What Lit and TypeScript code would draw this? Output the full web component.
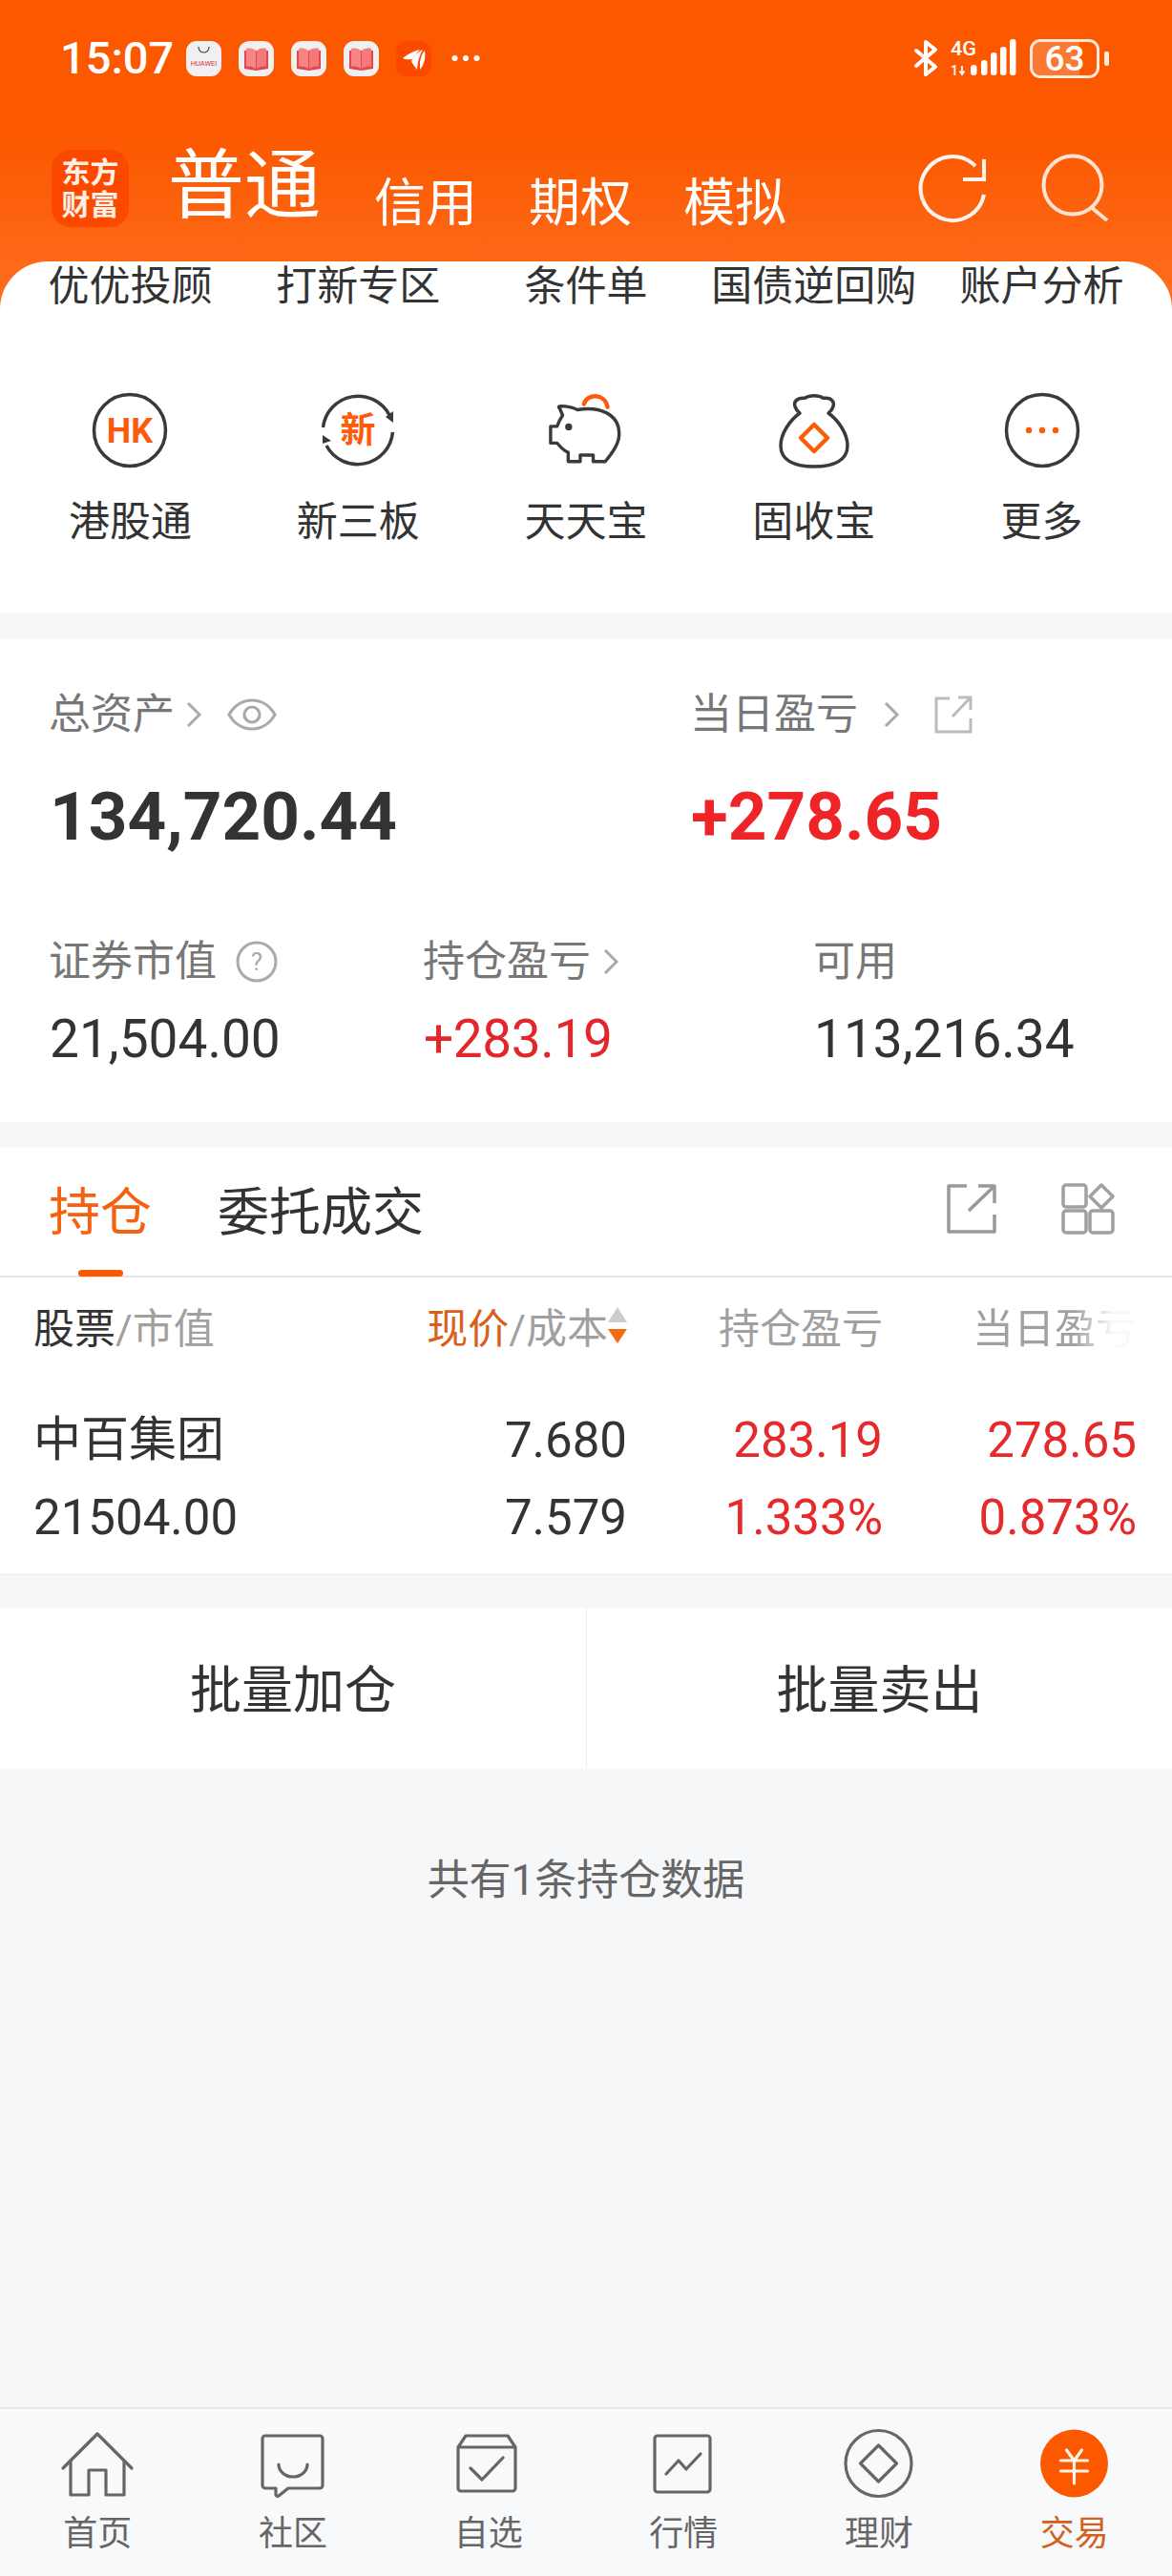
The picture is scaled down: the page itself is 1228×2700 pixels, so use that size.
import { LitElement, html, css } from "lit";
import { customElement } from "lit/decorators.js";

const book = html`<svg class="tile" viewBox="0 0 37 37">
  <rect width="37" height="37" rx="11" fill="#f1efef"/>
  <path d="M6 10 V29 L18.5 31 L31 29 V10 Z" fill="#e2474f"/>
  <path d="M8 8 C12 7 16 8 18 10 V29 C15 27 11 26 8 27 Z" fill="#f68584"/>
  <path d="M29 8 C25 7 21 8 19 10 V29 C22 27 26 26 29 27 Z" fill="#f47a7a"/>
</svg>`;

const quick1 = ["优优投顾", "打新专区", "条件单", "国债逆回购", "账户分析"];

const quick2 = [
  {
    label: "港股通",
    icon: html`<svg class="q" viewBox="0 0 80 80" fill="none">
      <circle cx="40" cy="40" r="37.5" stroke="#3a3a3a" stroke-width="3.5"/>
      <text x="40" y="53" class="qtext" text-anchor="middle" font-size="36">HK</text></svg>`,
  },
  {
    label: "新三板",
    icon: html`<svg class="q" viewBox="0 0 80 80" fill="none">
      <path d="M3.5 37 A37 37 0 0 1 73 24" stroke="#3a3a3a" stroke-width="3.5"/>
      <path d="M76.5 42 A37 37 0 0 1 7 56" stroke="#3a3a3a" stroke-width="3.5"/>
      <path d="M69 26 L77 20 V32 Z M3 54 V45 L12 51 Z" fill="#3a3a3a"/>
      <text x="40" y="53" class="qtext" text-anchor="middle" font-size="37">新</text></svg>`,
  },
  {
    label: "天天宝",
    icon: html`<svg class="q" viewBox="0 0 80 80" fill="none">
      <g transform="translate(0 1) scale(.97)">
      <path d="M39 12 C42 0 62 0 64.500 15" stroke="#fb5b0a" stroke-width="4.500" stroke-linecap="round"/>
      <path d="M13 17 Q10 14 14 14 Q24 14 32 18 C55 14 77 22 77 44 C77 55 70 64 62 74 H49 V67 H35 V74 H22 V64 C16 62 12 56 10 54 H3 V36 H10 C12 30 14 27 16 24 Z" stroke="#3a3a3a" stroke-width="3.500" stroke-linejoin="round"/>
      <circle cx="22.500" cy="36.500" r="3.800" fill="#3a3a3a"/></g></svg>`,
  },
  {
    label: "固收宝",
    icon: html`<svg class="q" viewBox="0 0 80 80" fill="none">
      <path d="M25 22 C20 18 18 12 21 9 C25 5 29 7 31 6 C35 3 45 3 49 6 C52 7 56 5 59 9 C62 12 60 18 55 22 C66 30 75 44 75 56 C75 72 60 78 40 78 C20 78 5 72 5 56 C5 44 14 30 25 22 Z" stroke="#3a3a3a" stroke-width="3.500" stroke-linejoin="round"/>
      <path d="M40 34 L54 48 L40 62 L26 48 Z" stroke="#fb5b0a" stroke-width="4.500" stroke-linejoin="round"/></svg>`,
  },
  {
    label: "更多",
    icon: html`<svg class="q" viewBox="0 0 80 80" fill="none">
      <circle cx="40" cy="40" r="37.500" stroke="#3a3a3a" stroke-width="3.500"/>
      <circle cx="26" cy="40" r="3.200" fill="#fb5b0a"/><circle cx="40" cy="40" r="3.200" fill="#fb5b0a"/><circle cx="54" cy="40" r="3.200" fill="#fb5b0a"/></svg>`,
  },
];

const navs = [
  {
    label: "首页",
    icon: html`<svg class="n" viewBox="0 0 80 80" fill="none" stroke="#666" stroke-width="3.200" stroke-linejoin="round" stroke-linecap="round">
      <path d="M4 42 L40 6 L76 42"/><path d="M12 34 V70 H31 V44 H49 V70 H68 V34"/></svg>`,
  },
  {
    label: "社区",
    icon: html`<svg class="n" viewBox="0 0 80 80" fill="none" stroke="#666" stroke-width="3.200" stroke-linejoin="round" stroke-linecap="round">
      <path d="M11 8 H68 a3 3 0 0 1 3 3 V60 a3 3 0 0 1 -3 3 H35 L25 71 q-2 1 -3 -1 V63 H11 a3 3 0 0 1 -3 -3 V11 a3 3 0 0 1 3 -3 z"/>
      <path d="M25 38 a15 13 0 0 0 30 0"/></svg>`,
  },
  {
    label: "自选",
    icon: html`<svg class="n" viewBox="0 0 80 80" fill="none" stroke="#666" stroke-width="3.200" stroke-linejoin="round" stroke-linecap="round">
      <path d="M8 20 L16 8 H60 L68 20 V63 a3 3 0 0 1 -3 3 H11 a3 3 0 0 1 -3 -3 Z M8 20 H68"/>
      <path d="M21 42 L33 54 L55 31"/></svg>`,
  },
  {
    label: "行情",
    icon: html`<svg class="n" viewBox="0 0 80 80" fill="none" stroke="#666" stroke-width="3.200" stroke-linejoin="round" stroke-linecap="round">
      <rect x="10" y="8" width="58" height="59" rx="3"/>
      <path d="M22 48 L35 34 L43 43 L58 27"/></svg>`,
  },
  {
    label: "理财",
    icon: html`<svg class="n" viewBox="0 0 80 80" fill="none" stroke="#666" stroke-width="3.200" stroke-linejoin="round">
      <circle cx="39.500" cy="37" r="34.500"/><path d="M39.500 18 L58.500 37 L39.500 56 L20.500 37 Z"/></svg>`,
  },
  {
    label: "交易",
    active: true,
    icon: html`<svg class="n" viewBox="0 0 80 80" fill="none" stroke="#fff3ea" stroke-width="3.200" stroke-linecap="round">
      <circle cx="39.500" cy="37" r="35.500" fill="#fb5800" stroke="none"/>
      <path d="M31.500 23 L39.500 34 L47.500 23 M25.500 34 H53.500 M25.500 45 H53.500 M39.500 34 V58"/></svg>`,
  },
];

const chevron = html`<svg class="chev" viewBox="0 0 18 28" fill="none" stroke="#aaa" stroke-width="3"><path d="M3 2 L15 14 L3 26"/></svg>`;

@customElement("app-root")
export class AppRoot extends LitElement {
  static styles = css`
    :host {
      display: flex;
      flex-direction: column;
      width: 1228px;
      height: 2700px;
      overflow: hidden;
      background: #f6f7f9;
      font-family: Roboto, "Noto Sans CJK SC", sans-serif;
      color: #333;
    }
    .head {
      background: linear-gradient(#fb5800 0, #fb5800 140px, #ff6f20 330px);
      padding-top: 26px;
    }
    .status {
      display: flex;
      align-items: center;
      height: 70px;
      padding-left: 63px;
      color: #fff;
    }
    .time {
      font-size: 47px;
      font-weight: 500;
      line-height: 56px;
      width: 132px;
    }
    .tile { width: 37px; height: 37px; margin-right: 18px; flex: none; }
    .more { width: 30px; height: 8px; margin-left: 3px; flex: none; }
    .status-right { margin-left: auto; display: flex; align-items: center; padding-right: 66px; }
    .bt { width: 24px; height: 38px; margin-right: 13px; }
    .sig { width: 72px; height: 40px; margin-right: 12px; }
    .sig text { font-family: Roboto, sans-serif; font-weight: 500; fill: #fff; }
    .bat {
      position: relative;
      box-sizing: border-box;
      width: 73px;
      height: 41px;
      border: 3px solid #ffe9dc;
      border-radius: 11px;
      display: flex;
      align-items: center;
      justify-content: center;
      font-size: 37px;
      font-weight: 500;
    }
    .bat-fill { position: absolute; left: 0; top: 0; bottom: 0; width: 49px; border-radius: 8px 0 0 8px; background: rgba(255, 255, 255, 0.2); }
    .bat-num { position: relative; line-height: 35px; }
    .tip { width: 5px; height: 15px; background: #ffe9dc; border-radius: 2px; margin-left: 5px; }
    .brand {
      display: flex;
      align-items: flex-end;
      height: 81px;
      margin-top: 61px;
      padding: 0 60px 0 54px;
      color: #fff;
    }
    .logo {
      width: 81px;
      height: 81px;
      border-radius: 20px;
      background: #fb4a00;
      color: #fff0e6;
      display: flex;
      flex-direction: column;
      align-items: center;
      justify-content: center;
      font-size: 30px;
      line-height: 34px;
      font-weight: 700;
      margin-right: 41px;
      flex: none;
    }
    .main-tab { font-size: 80px; line-height: 81px; margin-right: 56px; position: relative; top: -2px; }
    .sub-tab { font-size: 54px; line-height: 56px; margin-right: 54px; position: relative; top: 4px; }
    .ico-r { width: 80px; height: 80px; flex: none; }
    .refresh { margin-left: auto; margin-right: 50px; }
    .card {
      background: #fff;
      border-radius: 50px 50px 0 0;
      margin-top: 36px;
      height: 368px;
      padding: 0 17px;
      box-sizing: border-box;
      position: relative;
    }
    .q1 { display: grid; grid-template-columns: repeat(5, 1fr); height: 52px; }
    .q1 div { text-align: center; font-size: 43px; line-height: 52px; white-space: nowrap; }
    .q2 { display: grid; grid-template-columns: repeat(5, 1fr); margin-top: 85px; }
    .q2 .it { display: flex; flex-direction: column; align-items: center; }
    .q { width: 80px; height: 80px; display: block; }
    .qtext { fill: #fb5b0a; font-weight: 700; font-family: Roboto, "Noto Sans CJK SC", sans-serif; }
    .q2 .lb { font-size: 43px; line-height: 52px; margin-top: 30px; }
    .stats {
      background: #fff;
      margin-top: 28px;
      height: 506px;
      padding: 0 0 0 51px;
      box-sizing: border-box;
    }
    .lab {
      display: flex;
      align-items: center;
      font-size: 44px;
      line-height: 52px;
      color: #777;
      height: 52px;
    }
    .chev { width: 18px; height: 28px; flex: none; }
    .r1 { display: grid; grid-template-columns: 672px 1fr; padding-top: 53px; }
    .bigv { font-size: 71px; font-weight: 700; line-height: 84px; margin-top: 39px; margin-left: 1px; }
    .red1 { color: #ee2427; }
    .r2 { display: grid; grid-template-columns: 392px 409px 1fr; margin-top: 84px; }
    .midv { font-size: 55px; line-height: 64px; margin-top: 23px; margin-left: 1px; }
    .red2 { color: #e3262b; letter-spacing: -0.4px; }
    .table {
      background: #fff;
      margin-top: 27px;
      height: 447px;
      border-bottom: 1px solid #ececec;
    }
    .tabs {
      position: relative;
      display: flex;
      align-items: center;
      height: 136px;
      padding: 4px 60px 0 51px;
      border-bottom: 2px solid #e6e6e6;
      box-sizing: border-box;
    }
    .tab { font-size: 54px; line-height: 64px; margin-right: 69px; }
    .tab.on { color: #f4620f; }
    .bar { position: absolute; left: 82px; bottom: -1px; width: 47px; height: 7px; border-radius: 4px; background: #fb5800; }
    .ext { width: 52px; height: 52px; margin-left: auto; margin-right: 68px; position: relative; top: -5px; }
    .grd { width: 56px; height: 54px; position: relative; top: -5px; }
    .cols {
      display: grid;
      grid-template-columns: 1fr 280px 268px 266px;
      padding: 0 37px 0 35px;
    }
    .th { height: 100px; align-items: center; font-size: 43px; color: #a0a0a0; }
    .num { text-align: right; white-space: nowrap; }
    .dk { color: #333; }
    .or { color: #d9601a; }
    .sort { display: flex; justify-content: flex-end; align-items: center; }
    .sort svg { width: 20px; height: 38px; margin-left: 0; flex: none; }
    .fade {
      display: inline-block;
      -webkit-mask-image: linear-gradient(to right, #000 62%, rgba(0, 0, 0, 0.08) 85%);
      mask-image: linear-gradient(to right, #000 62%, rgba(0, 0, 0, 0.08) 85%);
    }
    .tr { font-size: 51px; line-height: 81px; padding-top: 30px; }
    .tr .name { font-size: 50px; }
    .trd { color: #e52a2c; }
    .btns { display: grid; grid-template-columns: 1fr 1fr; height: 169px; background: #fff; margin-top: 34px; }
    .btn { display: flex; align-items: center; justify-content: center; font-size: 54px; padding-bottom: 4px; }
    .btn + .btn { border-left: 1px solid #eee; }
    .empty { flex: 1; text-align: center; font-size: 44px; line-height: 54px; color: #666; padding-top: 90px; }
    .nav {
      display: grid;
      grid-template-columns: repeat(6, 1fr);
      height: 177px;
      background: #f8f9fb;
      border-top: 2px solid #e6e8ea;
      box-sizing: border-box;
    }
    .nav .it { display: flex; flex-direction: column; align-items: center; padding-top: 20px; }
    .n { width: 80px; height: 80px; display: block; }
    .nav .lb { font-size: 36px; line-height: 40px; color: #666; margin-top: 11px; }
    .nav .lb.on { color: #d2601f; }
    .mr { margin-left: 11px; }
    .eye { width: 52px; height: 36px; margin-left: 26px; }
    .share { width: 40px; height: 40px; margin-left: 36px; }
    .help { width: 44px; height: 44px; margin-left: 20px; }
    .sp27 { width: 26px; }
    .sp13 { width: 12px; }
  `;

  render() {
    return html`
      <section class="head">
        <div class="status">
          <div class="time">15:07</div>
          <svg class="tile" viewBox="0 0 37 37">
            <rect width="37" height="37" rx="11" fill="#f1efef"/>
            <path d="M13 6 C13 14 24 14 24 6" fill="none" stroke="#444" stroke-width="1.200"/>
            <text x="18.500" y="26" font-size="7.500" fill="#d4343f" text-anchor="middle" font-family="Roboto, sans-serif">HUAWEI</text>
          </svg>
          ${book}${book}${book}
          <svg class="tile" viewBox="0 0 37 37">
            <rect width="37" height="37" rx="11" fill="#fb4a00"/>
            <path d="M7 18 C13 13 20 10 25 9 C21 13 19 16 17 19 C14 19 10 20 7 18 Z M16 21 C19 15 23 11 28 9 C25 14 24 18 23 22 L22 30 C20 27 17 24 16 21 Z M25 22 C26 17 27 13 30 10 C31 17 30 24 25 30 Z" fill="#fff"/>
          </svg>
          <svg class="more" viewBox="0 0 30 8" fill="#fff"><circle cx="3.500" cy="4" r="3"/><circle cx="15" cy="4" r="3"/><circle cx="26.500" cy="4" r="3"/></svg>
          <div class="status-right">
            <svg class="bt" viewBox="0 0 24 38" fill="none" stroke="#fff" stroke-width="4" stroke-linejoin="round" stroke-linecap="round">
              <path d="M2 11 L22 28 L12 36 V2 L22 10 L2 27"/>
            </svg>
            <svg class="sig" viewBox="0 0 72 40" fill="#fff">
              <text x="1" y="17" font-size="21" textLength="27" lengthAdjust="spacingAndGlyphs">4G</text>
              <text x="1" y="38" font-size="14">1</text>
              <path d="M13 28 V36 M10.500 33.500 L13 37 L15.500 33.500" stroke="#fff" stroke-width="1.800" fill="none"/>
              <rect x="22" y="27" width="6.500" height="11" rx="3"/>
              <rect x="33" y="22" width="6.500" height="16" rx="3"/>
              <rect x="43" y="14" width="6.500" height="24" rx="3"/>
              <rect x="53" y="8" width="6.500" height="30" rx="3"/>
              <rect x="63" y="0" width="6.500" height="38" rx="3"/>
            </svg>
            <div class="bat"><div class="bat-fill"></div><span class="bat-num">63</span></div>
            <div class="tip"></div>
          </div>
        </div>
        <div class="brand">
          <div class="logo"><div>东方</div><div>财富</div></div>
          <div class="main-tab">普通</div>
          <div class="sub-tab">信用</div>
          <div class="sub-tab">期权</div>
          <div class="sub-tab">模拟</div>
          <svg class="ico-r refresh" viewBox="0 0 80 80" fill="none" stroke="#fff5ee" stroke-width="4">
            <path d="M73 46 A33.500 33.500 0 1 1 64 16"/><path d="M73 9 V30 H51"/>
          </svg>
          <svg class="ico-r" viewBox="0 0 80 80" fill="none" stroke="#ffe3d2" stroke-width="4">
            <circle cx="36" cy="36" r="30.500"/><path d="M55 59 L72 73"/>
          </svg>
        </div>
        <div class="card">
          <div class="q1">${quick1.map((t) => html`<div>${t}</div>`)}</div>
          <div class="q2">
            ${quick2.map((q) => html`<div class="it">${q.icon}<div class="lb">${q.label}</div></div>`)}
          </div>
        </div>
      </section>

      <section class="stats">
        <div class="r1">
          <div>
            <div class="lab">总资产<span class="mr"></span>${chevron}
              <svg class="eye" viewBox="0 0 52 36" fill="none" stroke="#aaa" stroke-width="3.200">
                <path d="M2 18 C13 -2 39 -2 50 18 C39 38 13 38 2 18 Z"/><circle cx="26" cy="18" r="8"/>
              </svg>
            </div>
            <div class="bigv">134,720.44</div>
          </div>
          <div>
            <div class="lab">当日盈亏<span class="sp27"></span>${chevron}
              <svg class="share" viewBox="0 0 40 40" fill="none" stroke="#bbb" stroke-width="3">
                <path d="M16 3 H2 V38 H38 V24"/><path d="M19 22 L37 3 M25 2 H38 V15"/>
              </svg>
            </div>
            <div class="bigv red1">+278.65</div>
          </div>
        </div>
        <div class="r2">
          <div>
            <div class="lab">证券市值
              <svg class="help" viewBox="0 0 44 44" fill="none" stroke="#aaa" stroke-width="3">
                <circle cx="22" cy="22" r="20"/>
                <text x="22" y="31" font-size="26" fill="#aaa" stroke="none" text-anchor="middle">?</text>
              </svg>
            </div>
            <div class="midv">21,504.00</div>
          </div>
          <div>
            <div class="lab">持仓盈亏<span class="sp13"></span>${chevron}</div>
            <div class="midv red2">+283.19</div>
          </div>
          <div>
            <div class="lab">可用</div>
            <div class="midv">113,216.34</div>
          </div>
        </div>
      </section>

      <section class="table">
        <div class="tabs">
          <div class="tab on">持仓</div>
          <div class="tab">委托成交</div>
          <svg class="ext" viewBox="0 0 52 52" fill="none" stroke="#999" stroke-width="3.500" stroke-linejoin="round">
            <path d="M21 2 H2 V50 H50 V32"/><path d="M23 28 L49 3 M33 2 H50 V20"/>
          </svg>
          <svg class="grd" viewBox="0 0 56 54" fill="none" stroke="#a0a0a0" stroke-width="3.500" stroke-linejoin="round">
            <rect x="2" y="2" width="24" height="23" rx="3"/>
            <rect x="2" y="29" width="24" height="23" rx="3"/>
            <rect x="30" y="29" width="24" height="23" rx="3"/>
            <path d="M42 2 L54 14 L42 26 L30 14 Z"/>
          </svg>
          <div class="bar"></div>
        </div>
        <div class="cols th">
          <div><span class="dk">股票</span>/市值</div>
          <div class="sort"><span><span class="or">现价</span>/成本</span>
            <svg viewBox="0 0 20 38"><path d="M10 0 L20 16 H0 Z" fill="#ccc"/><path d="M0 23 H20 L10 38 Z" fill="#f26a10"/></svg>
          </div>
          <div class="num">持仓盈亏</div>
          <div class="num"><span class="fade">当日盈亏</span></div>
        </div>
        <div class="cols tr">
          <div class="name">中百集团</div><div class="num">7.680</div><div class="num trd">283.19</div><div class="num trd">278.65</div>
          <div>21504.00</div><div class="num">7.579</div><div class="num trd">1.333%</div><div class="num trd">0.873%</div>
        </div>
      </section>

      <section class="btns">
        <div class="btn">批量加仓</div>
        <div class="btn">批量卖出</div>
      </section>

      <div class="empty">共有1条持仓数据</div>

      <nav class="nav">
        ${navs.map(
          (n) => html`<div class="it">${n.icon}<div class="lb ${n.active ? "on" : ""}">${n.label}</div></div>`
        )}
      </nav>
    `;
  }
}
